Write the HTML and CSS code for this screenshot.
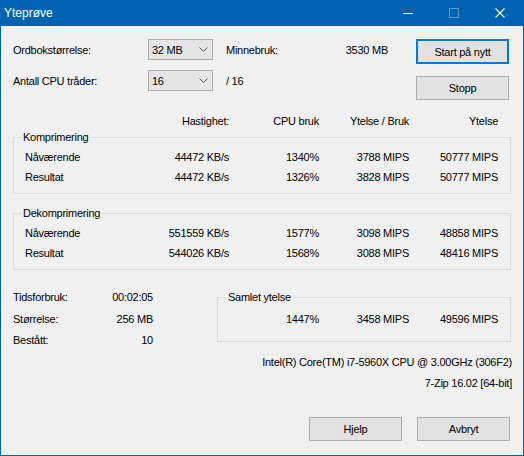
FILE: index.html
```html
<!DOCTYPE html>
<html>
<head>
    <meta charset="utf-8">
    <title>Yteprøve</title>
    <link rel="stylesheet" href="styles.css">
</head>
<body>
    <div class="window">
        <div class="titlebar">
            <span class="caption">Yteprøve</span>
            <div class="caption-buttons">
                <span class="cap-btn"><span class="min-line"></span></span>
                <span class="cap-btn"><span class="max-box"></span></span>
                <span class="cap-btn">
                    <svg width="10" height="10" viewBox="0 0 10 10">
                        <path d="M0.5 0.5 L9.5 9.5 M9.5 0.5 L0.5 9.5" stroke="#fff" stroke-width="1.1" fill="none"/>
                    </svg>
                </span>
            </div>
        </div>

        <div class="client">
            <div class="top">
                <div class="settings">
                    <span>Ordbokstørrelse:</span>
                    <div class="combo"><span>32 MB</span><svg class="chevron" width="9" height="5" viewBox="0 0 9 5"><path d="M0.5 0.5 L4.5 4.5 L8.5 0.5" stroke="#555" fill="none"/></svg></div>
                    <div class="mem"><span>Minnebruk:</span><span>3530 MB</span></div>

                    <span>Antall CPU tråder:</span>
                    <div class="combo"><span>16</span><svg class="chevron" width="9" height="5" viewBox="0 0 9 5"><path d="M0.5 0.5 L4.5 4.5 L8.5 0.5" stroke="#555" fill="none"/></svg></div>
                    <div class="mem"><span>/ 16</span></div>
                </div>
                <div class="side-buttons">
                    <button class="btn default">Start på nytt</button>
                    <button class="btn">Stopp</button>
                </div>
            </div>

            <div class="cols head">
                <span></span>
                <span>Hastighet:</span>
                <span>CPU bruk</span>
                <span>Ytelse / Bruk</span>
                <span>Ytelse</span>
            </div>

            <fieldset class="group">
                <legend>Komprimering</legend>
                <div class="cols">
                    <span>Nåværende</span><span>44472 KB/s</span><span>1340%</span><span>3788 MIPS</span><span>50777 MIPS</span>
                    <span>Resultat</span><span>44472 KB/s</span><span>1326%</span><span>3828 MIPS</span><span>50777 MIPS</span>
                </div>
            </fieldset>

            <fieldset class="group second">
                <legend>Dekomprimering</legend>
                <div class="cols">
                    <span>Nåværende</span><span>551559 KB/s</span><span>1577%</span><span>3098 MIPS</span><span>48858 MIPS</span>
                    <span>Resultat</span><span>544026 KB/s</span><span>1568%</span><span>3088 MIPS</span><span>48416 MIPS</span>
                </div>
            </fieldset>

            <div class="bottom">
                <div class="stats">
                    <span>Tidsforbruk:</span><span>00:02:05</span>
                    <span>Størrelse:</span><span>256 MB</span>
                    <span>Bestått:</span><span>10</span>
                </div>
                <fieldset class="total">
                    <legend>Samlet ytelse</legend>
                    <div class="total-cols">
                        <span>1447%</span><span>3458 MIPS</span><span>49596 MIPS</span>
                    </div>
                </fieldset>
            </div>

            <div class="info">
                <span>Intel(R) Core(TM) i7-5960X CPU @ 3.00GHz (306F2)</span>
                <span>7-Zip 16.02 [64-bit]</span>
            </div>

            <div class="actions">
                <button class="btn">Hjelp</button>
                <button class="btn">Avbryt</button>
            </div>
        </div>
    </div>
</body>
</html>
```

FILE: styles.css
```css
body {
    margin: 0;
    background-color: #f0f0f0;
    font-family: "Liberation Sans", Arial, sans-serif;
    font-size: 11px;
    letter-spacing: -0.25px;
    color: #000;
}

.window {
    width: 524px;
    height: 456px;
    box-sizing: border-box;
    border: 1px solid #0063b1;
    border-top: none;
    background-color: #f0f0f0;
}

.titlebar {
    height: 26px;
    margin: 0 -1px;
    background-color: #0063b1;
    display: flex;
    align-items: center;
    justify-content: space-between;
    letter-spacing: 0;
}

.caption {
    padding-left: 4px;
    color: #fff;
    font-size: 12px;
}

.caption-buttons {
    display: flex;
    height: 100%;
    padding-right: 1px;
}

.cap-btn {
    width: 46px;
    display: flex;
    align-items: center;
    justify-content: center;
}

.min-line {
    width: 10px;
    height: 1px;
    background-color: #fff;
}

.max-box {
    width: 8px;
    height: 8px;
    border: 1px solid rgba(255, 255, 255, 0.35);
}

/* top settings */

.top {
    display: flex;
    padding: 13px 0 0 12px;
}

.settings {
    display: grid;
    grid-template-columns: 135px 65px 175px;
    grid-auto-rows: 21px;
    row-gap: 10px;
    align-items: center;
}

.combo {
    height: 21px;
    box-sizing: border-box;
    border: 1px solid #adadad;
    background-color: #e5e5e5;
    display: flex;
    align-items: center;
    justify-content: space-between;
    padding: 0 4px 0 3px;
}

.chevron {
    display: block;
}

.mem {
    display: flex;
    justify-content: space-between;
    margin-left: 13px;
}

.side-buttons {
    display: flex;
    flex-direction: column;
    gap: 12px;
    margin-left: 28px;
}

.btn {
    width: 93px;
    height: 24px;
    box-sizing: border-box;
    border: 1px solid #adadad;
    background-color: #e1e1e1;
    font-family: inherit;
    font-size: 11px;
    letter-spacing: -0.25px;
    color: #000;
    padding: 0;
}

.btn.default {
    height: 25px;
    border-color: #0078d7;
    box-shadow: inset 0 0 0 1px #0078d7;
}

/* results table */

.cols {
    display: grid;
    grid-template-columns: 115px 89px 90px 90px 89px;
    grid-auto-rows: 16px;
    row-gap: 4px;
    line-height: 16px;
}

.cols > span {
    text-align: right;
}

.cols > span:nth-child(5n+1) {
    text-align: left;
}

.head {
    margin: 13px 0 0 24px;
}

.group {
    margin: 0 12px;
    padding: 4px 11px 8px 11px;
    border: 1px solid #dcdcdc;
}

.group.second {
    margin-top: 11px;
}

legend {
    padding: 0 1px;
    margin-left: -3px;
    line-height: 16px;
}

/* bottom area */

.bottom {
    display: flex;
    justify-content: space-between;
    align-items: flex-start;
    margin: 19px 12px 0 12px;
}

.stats {
    width: 140px;
    display: grid;
    grid-template-columns: 1fr auto;
    grid-auto-rows: 21.5px;
    line-height: 16px;
}

.stats span:nth-child(2n) {
    text-align: right;
}

.total {
    width: 294px;
    box-sizing: border-box;
    margin: 0;
    padding: 6px 12px 14px 11px;
    border: 1px solid #dcdcdc;
}

.total legend {
    margin-left: -2px;
}

.total-cols {
    display: grid;
    grid-template-columns: 90px 90px 89px;
    line-height: 16px;
    text-align: right;
}

.info {
    display: flex;
    flex-direction: column;
    align-items: flex-end;
    gap: 5px;
    margin-top: 0;
    padding-right: 11px;
    line-height: 16px;
}

.actions {
    display: flex;
    justify-content: flex-end;
    gap: 15px;
    margin-top: 26px;
    padding-right: 13px;
}
```
